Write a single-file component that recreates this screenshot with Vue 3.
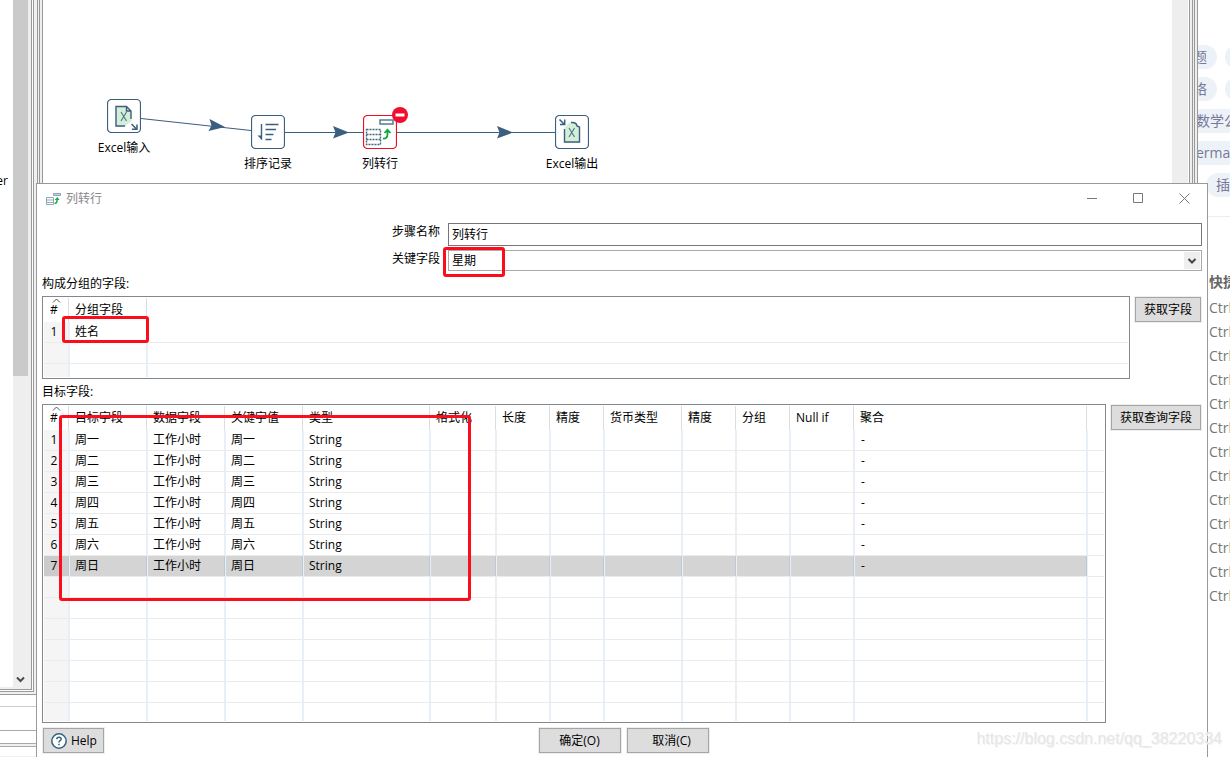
<script setup>
import { ref } from 'vue'

const stepName = ref('列转行')
const keyField = ref('星期')

const tags = [
  { text: '题', kind: 'cut', more: true },
  { text: '络', kind: 'cut', more: true },
  { text: '数学公', kind: 'open' },
  { text: 'erma', kind: 'open' },
  { text: '插', kind: 'start' },
]
const shortcutCount = 13

const nodes = [
  { id: 'input', label: 'Excel输入' },
  { id: 'sort', label: '排序记录' },
  { id: 'pivot', label: '列转行' },
  { id: 'output', label: 'Excel输出' },
]

const targetColumns = ['目标字段', '数据字段', '关键字值', '类型', '格式化', '长度', '精度', '货币类型', '精度', '分组', 'Null if', '聚合']
const days = ['周一', '周二', '周三', '周四', '周五', '周六', '周日']
const targetRows = days.map((d) => [d, '工作小时', d, 'String', '', '', '', '', '', '', '', '-'])
</script>

<template>
  <div class="screen">
    <div class="backdrop">
      <aside class="left">
        <div class="tree-frame">
          <div class="tree">
            <div class="tree-body"><span>er</span></div>
            <div class="scrollbar">
              <div class="thumb"></div>
              <svg class="down" width="9" height="7" viewBox="0 0 9 7"><path d="M1 1.5 4.5 5 8 1.5" fill="none" stroke="#4a4a4a" stroke-width="2" /></svg>
            </div>
          </div>
        </div>
        <div class="status"><i class="s1"></i><i class="s2"></i><i class="s3"></i></div>
      </aside>
      <div class="rail rail-left"><i></i></div>
      <main class="canvas">
        <svg class="hops" width="640" height="180" viewBox="43 0 640 180">
          <g fill="none" stroke="#3b5f7e" stroke-width="1.2">
            <path d="M141 118.5 251 130.5" />
            <path d="M285 132.5H363M397 132.5H555" />
          </g>
          <g fill="#3b5f7e">
            <path d="M209.500 119 225 127 208.500 131 211.500 125.500Z" />
            <path d="M333 126 349 132.500 333 138.500 335.500 132.500Z" />
            <path d="M497 126 513 132.500 497 138.500 499.500 132.500Z" />
          </g>
        </svg>
        <div v-for="n in nodes" :key="n.id" class="node" :class="n.id">
          <svg v-if="n.id === 'input'" width="34" height="34" viewBox="0 0 34 34">
            <rect x=".5" y=".5" width="33" height="33" rx="4" fill="#fff" stroke="#3b5f7e" stroke-width="1.200" />
            <path d="M8.500 7.500H19.500L24.500 13V22L18 27.500H8.500Z" fill="#d5eed8" />
            <path d="M18 27H9V7.500H19.500L24 12V20M19.500 7.500V12H24" fill="none" stroke="#3b5f7e" stroke-width="1.400" />
            <path d="M14 13 19.500 22M19.500 13 14 22" stroke="#47758a" stroke-width="1.100" />
            <path d="M24.500 25 29.500 30M30 25.500V30.300H25" fill="none" stroke="#3b5f7e" stroke-width="1.500" />
          </svg>
          <svg v-else-if="n.id === 'sort'" width="34" height="34" viewBox="0 0 34 34">
            <rect x=".5" y=".5" width="33" height="33" rx="4" fill="#fff" stroke="#3b5f7e" stroke-width="1.200" />
            <path d="M10.500 9V24.500M14.500 9.500H27.500M14.500 14.500H25M14.500 19.500H22.500M14.500 24.500H20.500" stroke="#3b5f7e" stroke-width="1.400" />
            <path d="M6.500 20.500 11 20.500V25Z" fill="#3b5f7e" />
          </svg>
          <svg v-else-if="n.id === 'pivot'" width="34" height="34" viewBox="0 0 34 34">
            <rect x=".5" y=".5" width="33" height="33" rx="4" fill="#fff" stroke="#f20d20" stroke-width="1.200" />
            <rect x="17" y="5" width="13" height="4" fill="#fff" stroke="#567c91" stroke-width="1.500" />
            <path d="M3.500 14.500H17.500V29.500H3.500ZM3.500 19.500H17.500M3.500 24.500H17.500" fill="none" stroke="#47697e" stroke-width="1.400" stroke-dasharray="2 1" />
            <path d="M20 23.500Q24.500 24 24.500 19V15.500M21.500 18 24.500 14.800 27.500 18" fill="none" stroke="#0aa83c" stroke-width="1.800" />
          </svg>
          <svg v-else width="34" height="34" viewBox="0 0 34 34">
            <rect x=".5" y=".5" width="33" height="33" rx="4" fill="#fff" stroke="#3b5f7e" stroke-width="1.200" />
            <path d="M9.500 12.500 14.500 7.500H20L24.500 12V27.500H9.500Z" fill="#d5eed8" />
            <path d="M9.500 14V27H24.500V12L22 11Q21.500 7 16 7.500" fill="none" stroke="#3b5f7e" stroke-width="1.400" />
            <path d="M14 13 19.500 22M19.500 13 14 22" stroke="#47758a" stroke-width="1.100" />
            <path d="M4.500 4.500 9 9M9.700 4.500V9.500H5" fill="none" stroke="#3b5f7e" stroke-width="1.500" />
          </svg>
          <svg v-if="n.id === 'pivot'" class="stop" width="16" height="16" viewBox="0 0 16 16"><circle cx="8" cy="8" r="8" fill="#f20d30" /><path d="M3.500 8H12.500" stroke="#fff" stroke-width="3" /></svg>
          <span>{{ n.label }}</span>
        </div>
      </main>
      <div class="canvas-scroll"></div>
      <div class="rail rail-right"><i></i></div>
      <aside class="web">
        <div class="tags">
          <div v-for="t in tags" :key="t.text" class="tag-row">
            <span class="tag" :class="t.kind">{{ t.text }}</span>
            <span v-if="t.more" class="tag"></span>
          </div>
        </div>
        <div class="keys">
          <h3>快捷</h3>
          <p v-for="i in shortcutCount" :key="i">Ctrl</p>
        </div>
      </aside>
    </div>

    <section class="dialog">
      <header class="titlebar">
        <svg width="16" height="14" viewBox="0 0 16 14">
          <path d="M7.500 1.500H14.500V3.500H7.500Z" fill="#c7d3e2" stroke="#8fa3b4" />
          <path d="M.5 5.500H7.500V12.500H.5ZM.5 8H7.500M.5 10.500H7.500" fill="#fff" stroke="#92a8b4" />
          <path d="M8.500 11.500Q11 11.500 11 8.500V6.500" fill="none" stroke="#19b14a" stroke-width="1.500" /><path d="M8.500 8 11.500 5 13.500 8Z" fill="#19b14a" />
        </svg>
        <span class="title">列转行</span>
        <button aria-label="最小化"><svg width="11" height="11" viewBox="0 0 11 11"><path d="M0 5.500H10" stroke="#777" /></svg></button>
        <button aria-label="最大化"><svg width="11" height="11" viewBox="0 0 11 11"><path d="M.5.500H9.500V9.500H.5Z" fill="none" stroke="#777" /></svg></button>
        <button aria-label="关闭"><svg width="11" height="11" viewBox="0 0 11 11"><path d="M.5.500 10.500 10.500M10.500.500.5 10.500" stroke="#777" /></svg></button>
      </header>

      <form class="form" @submit.prevent>
        <label for="step">步骤名称</label>
        <input id="step" v-model="stepName" type="text" />
        <label for="key">关键字段</label>
        <div class="select">
          <select id="key" v-model="keyField"><option>星期</option></select>
          <svg width="16" height="17" viewBox="0 0 16 17"><path d="M0 0H16V17H0Z" fill="#eee" /><path d="M4.500 7 8 10.500 11.500 7" fill="none" stroke="#444" stroke-width="2" /></svg>
          <div class="mark mark-key"></div>
        </div>
      </form>

      <h2>构成分组的字段:</h2>
      <div class="block">
        <div class="grid group-grid">
          <table>
            <colgroup><col class="w26" /><col class="w78" /><col /></colgroup>
            <thead>
              <tr><th class="num"><svg width="9" height="5" viewBox="0 0 9 5"><path d="M1 4.500 4.500 1 8 4.500" fill="none" stroke="#555" /></svg>#</th><th>分组字段</th><th class="rest"></th></tr>
            </thead>
            <tbody>
              <tr><td class="num">1</td><td>姓名</td><td class="rest"></td></tr>
              <tr><td class="num"></td><td></td><td class="rest"></td></tr>
              <tr class="tail"><td class="num"></td><td></td><td class="rest"></td></tr>
            </tbody>
          </table>
          <div class="mark mark-group"></div>
        </div>
        <button class="btn">获取字段</button>
      </div>

      <h2>目标字段:</h2>
      <div class="block">
        <div class="grid">
          <table>
            <colgroup>
              <col class="w26" /><col class="w78" /><col class="w78" /><col class="w78" /><col class="w127" /><col class="w66" /><col class="w54" /><col class="w54" /><col class="w78" /><col class="w54" /><col class="w54" /><col class="w64" /><col class="w233" /><col />
            </colgroup>
            <thead>
              <tr>
                <th class="num"><svg width="9" height="5" viewBox="0 0 9 5"><path d="M1 4.500 4.500 1 8 4.500" fill="none" stroke="#555" /></svg>#</th>
                <th v-for="(c, i) in targetColumns" :key="i">{{ c }}</th>
                <th class="rest"></th>
              </tr>
            </thead>
            <tbody>
              <tr v-for="(r, i) in targetRows" :key="i" :class="{ selected: i === 6 }">
                <td class="num">{{ i + 1 }}</td>
                <td v-for="(v, j) in r" :key="j">{{ v }}</td>
                <td class="rest"></td>
              </tr>
              <tr v-for="i in 7" :key="'e' + i" :class="{ tail: i === 7 }">
                <td class="num"></td>
                <td v-for="j in 12" :key="j"></td>
                <td class="rest"></td>
              </tr>
            </tbody>
          </table>
          <div class="mark mark-target"></div>
        </div>
        <button class="btn">获取查询字段</button>
      </div>

      <footer>
        <button class="btn help">
          <svg width="16" height="16" viewBox="0 0 16 16"><circle cx="8" cy="8" r="7.200" fill="#fff" stroke="#336381" stroke-width="1.500" /><path d="M5.800 6.300Q5.800 4.200 8 4.200 10.200 4.200 10.200 6 10.200 7 9 7.700 8 8.300 8 9.500M8 10.800V12.300" fill="none" stroke="#336381" stroke-width="1.500" /></svg>
          Help
        </button>
        <div class="actions">
          <button class="btn">确定(O)</button>
          <button class="btn cancel">取消(C)</button>
        </div>
      </footer>
    </section>
    <div class="watermark">https://blog.csdn.net/qq_38220334</div>
  </div>
</template>

<style>
body { background: #fff; overflow: hidden; }
</style>

<style scoped>
* { box-sizing: border-box; }
.screen {
  position: relative;
  height: 100vh;
  overflow: hidden;
  background: #fff;
  color: #000;
  font: 12px/16px "Open Sans", "Noto Sans CJK SC", sans-serif;
}
button, input, select { font: inherit; color: inherit; margin: 0; }
svg { display: block; flex: none; }
.backdrop { display: flex; height: 100%; }
.left { width: 37px; display: flex; flex-direction: column; background: #f0f0f0; }
.tree-frame { flex: 1; width: 34px; padding: 0 1px 1px 0; border: solid #999; border-width: 0 1px 1px 0; background: #fff; display: flex; }
.tree { flex: 1; display: flex; border: solid #999; border-width: 0 1px 1px 0; background: #eee; padding: 0 3px 2px 0; }
.tree-body { width: 13px; background: #fff; padding: 173px 5px 0 0; display: flex; justify-content: flex-end; }
.scrollbar { flex: 1; background: #eee; display: flex; flex-direction: column; justify-content: space-between; align-items: center; padding-bottom: 4px; }
.thumb { align-self: stretch; height: 376px; background: #cacaca; }
.status { height: 65px; padding-top: 2px; display: flex; flex-direction: column; }
.status i { display: block; }
.s1 { height: 13px; border: solid #999; border-width: 1px 0; border-bottom-color: #ccc; background: #fff; }
.s2 { height: 24px; border-bottom: 1px solid #aaa; background: #fff; }
.s3 { height: 13px; border-bottom: 1px solid #aaa; background: #fff; box-shadow: 0 2px #f0f0f0, 0 3px #aaa, 0 12px #fff; }
.rail { background: #eee; border: solid #999; border-width: 0 1px; }
.rail i { display: block; height: 100%; }
.rail-left { width: 6px; padding-left: 1px; }
.rail-left i { border-left: 1px solid #999; }
.rail-right { width: 9px; padding: 0 2px; }
.rail-right i { border: solid #999; border-width: 0 1px; width: 3px; }
.canvas { flex: 1; position: relative; background: #fff; }
.canvas-scroll { width: 17px; background: #eee; border-right: 1px solid #fff; }
.hops { position: absolute; left: 0; top: 0; }
.node { position: absolute; width: 34px; display: flex; flex-direction: column; align-items: center; gap: 7px; white-space: nowrap; }
.node.input { left: 64px; top: 99px; }
.node.sort { left: 208px; top: 115px; }
.node.pivot { left: 320px; top: 115px; }
.node.output { left: 512px; top: 115px; }
.stop { position: absolute; left: 29px; top: -8px; }

.web { width: 32px; overflow: hidden; font-size: 14px; line-height: 24px; color: #77799a; }
.tags { display: flex; flex-direction: column; gap: 8px; padding: 45px 0 19px; border-bottom: 1px solid #eee; }
.tag-row { display: flex; gap: 8px; height: 24px; }
.tag { flex: none; min-width: 34px; padding: 0 10px; border-radius: 12px; background: #ecf2f7; white-space: nowrap; }
.tag.cut { margin-left: -15px; }
.tag.open { margin-left: -2px; padding: 0; border-radius: 0; }
.tag.start { margin-left: 8px; }
.keys { padding: 53px 0 0 11px; color: #777; }
.keys h3 { margin: 0 0 2px; font-size: 14px; line-height: 24px; white-space: nowrap; color: #666; }
.keys p { margin: 0; }

.dialog { position: absolute; left: 36px; right: 22px; top: 183px; bottom: 0; padding: 0 5px; background: #fff; border: solid #999; border-width: 1px 1px 0; }
.titlebar { display: flex; align-items: center; height: 29px; padding-left: 4px; gap: 4px; color: #888; }
.title { flex: 1; }
.titlebar button { width: 42px; height: 28px; padding: 0; border: 0; background: none; display: grid; place-items: center; }
.titlebar button:last-child { margin-right: -3px; }
.form { display: grid; grid-template-columns: 398px 1fr; column-gap: 8px; row-gap: 4px; padding-top: 10px; }
.form label { text-align: right; padding-top: 1px; }
.form input { height: 23px; padding: 0 3px 2px; border: 1px solid #777; border-radius: 0; background: #fff; outline: 0; min-width: 0; }
.select { position: relative; height: 21px; display: flex; align-items: center; border: 1px solid #aaa; padding: 1px; }
.select select { flex: 1; height: 17px; border: 0; padding: 0 2px; background: #fff; appearance: none; outline: 0; line-height: 17px; }
h2 { margin: 0; font: inherit; height: 16px; }
.form + h2 { margin-top: 5px; }
.block { display: flex; align-items: flex-start; gap: 5px; padding: 4px 1px 5px 0; }
.grid { position: relative; flex: 1; padding: 1px; border: 1px solid #828790; background: #fff; min-width: 0; }
table { width: 100%; table-layout: fixed; border-collapse: separate; border-spacing: 0; }
.w26 { width: 26px; } .w54 { width: 54px; } .w64 { width: 64px; } .w66 { width: 66px; }
.w78 { width: 78px; } .w127 { width: 127px; } .w233 { width: 233px; }
th { position: relative; height: 24px; padding: 0 0 0 5px; font-weight: normal; text-align: left; white-space: nowrap; border-right: 1px solid #fff; box-shadow: inset -1px 0 #ddd; }
th svg { position: absolute; left: 8px; top: 0; }
td { height: 21px; padding: 0 0 0 5px; line-height: 16px; white-space: nowrap; border-right: 1px solid #e8eff7; border-bottom: 1px solid #ebebeb; box-shadow: inset -1px 0 #e8eff7; }
td:nth-child(13) { padding-left: 6px; }
th.num, td.num { padding: 0 5px 0 0; text-align: center; }
td.num { background: #f5f5f5; }
th.rest, td.rest { border-right: 0; box-shadow: none; padding: 0; }
.selected td { background: #d4d4d4; box-shadow: inset -1px 0 #bcc8d4; }
.selected td.num { background: #cbcbcb; }
.selected td.rest { background: #fff; box-shadow: none; }
.tail td { height: 18px; border-bottom: 0; }
.group-grid .tail td { height: 13px; }
.btn { height: 25px; padding: 0 8px; border: 1px solid #a5a5a5; border-radius: 0; background: #ddd; box-shadow: 0 0 0 1px #eee; white-space: nowrap; line-height: 16px; }
.block .btn { margin-top: 1px; }
footer { display: grid; grid-template-columns: 1fr auto 1fr; padding: 0 0 0 1px; }
.help { justify-self: start; display: flex; align-items: center; gap: 4px; padding: 0 6px 0 7px; }
.actions { display: flex; gap: 6px; padding-left: 2px; }
.actions .btn { width: 82px; }
.actions .cancel { padding-left: 16px; }
.mark { position: absolute; border: 3px solid #fc0d1b; border-radius: 3px; pointer-events: none; }
.mark-key { left: -6px; top: -4px; width: 62px; height: 30px; }
.mark-group { left: 19px; top: 19px; width: 87px; height: 27px; }
.mark-target { left: 16px; top: 10px; width: 412px; height: 186px; }
.watermark { position: absolute; right: 8px; bottom: 8px; font: 16px/20px "Liberation Sans", sans-serif; color: #e6e6e6; text-shadow: 1px 1px #f4f4f4; }
</style>
